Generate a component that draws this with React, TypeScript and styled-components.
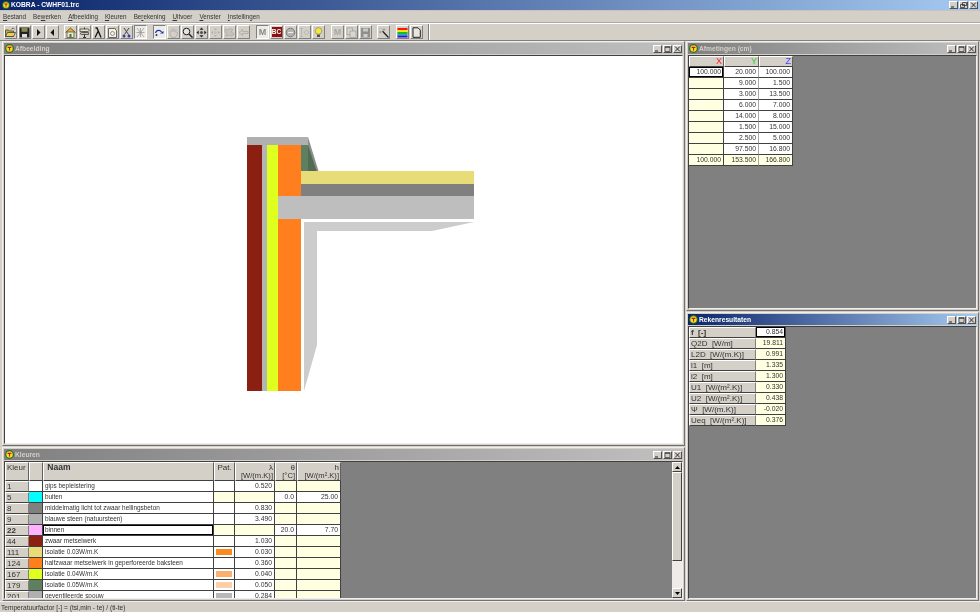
import React from "react";
import styled, { createGlobalStyle } from "styled-components";

const GlobalStyle = createGlobalStyle`
  html, body {
    margin: 0;
    padding: 0;
    overflow: hidden;
    background: #d4d0c8;
  }
  * {
    box-sizing: border-box;
  }
`;

const Page = styled.div`
  width: 980px;
  height: 612px;
  display: flex;
  flex-direction: column;
  background: #d4d0c8;
  font-family: "Liberation Sans", Arial, sans-serif;
  color: #333;
  overflow: hidden;
  filter: blur(0.3px);
`;

const AppTitle = styled.div`
  height: 11px;
  flex: none;
  display: flex;
  align-items: center;
  padding: 0 2px 1px 2px;
  gap: 1px;
  background: linear-gradient(90deg, #0a246a, #a6caf0);
  color: #fff;
  font-size: 6.7px;
  font-weight: bold;
  border-bottom: 1px solid #c4c4c4;
`;

const TitleText = styled.span`
  flex: 1;
  white-space: nowrap;
`;

const CaptionGroup = styled.div`
  display: flex;
  gap: 1px;
`;

const CaptionBtn = styled.div`
  width: 9px;
  height: 8px;
  background: #d4d0c8;
  border: 1px solid;
  border-color: #fff #505050 #505050 #fff;
  display: flex;
  align-items: center;
  justify-content: center;
  svg {
    display: block;
  }
`;

const MenuBar = styled.div`
  height: 12px;
  flex: none;
  display: flex;
  align-items: center;
  gap: 7px;
  padding-left: 3px;
  font-size: 6.3px;
  border-bottom: 1px solid #a9a9a9;
`;

const ToolBar = styled.div`
  height: 18px;
  flex: none;
  display: flex;
  align-items: center;
  padding-left: 4px;
  border-top: 1px solid #fff;
  border-bottom: 1px solid #808080;
`;

const ToolGroup = styled.div<{ $gap: number }>`
  display: flex;
  gap: 1px;
  margin-right: ${(p) => p.$gap}px;
`;

const ToolEnd = styled.div`
  width: 1px;
  height: 16px;
  background: #808080;
  box-shadow: 1px 0 0 #fff;
`;

const ToolBtn = styled.div<{ $pressed?: boolean; $lit?: boolean }>`
  width: 13px;
  height: 14px;
  display: flex;
  align-items: center;
  justify-content: center;
  border: 1px solid;
  border-color: ${(p) => (p.$pressed ? "#808080 #fff #fff #808080" : "#fff #808080 #808080 #fff")};
  background: ${(p) => (p.$lit ? "#eeece6" : "#d4d0c8")};
  svg {
    display: block;
  }
`;

const ToolLetter = styled.span<{ $color: string; $bg?: string; $size: number }>`
  display: block;
  width: 10px;
  height: 10px;
  line-height: 10px;
  text-align: center;
  font-size: ${(p) => p.$size}px;
  font-weight: bold;
  color: ${(p) => p.$color};
  background: ${(p) => p.$bg || "transparent"};
`;

const Desktop = styled.div`
  position: relative;
  flex: 1;
  min-height: 0;
`;

type FrameProps = { $x: number; $y: number; $w: number; $h: number };

const Frame = styled.section<FrameProps>`
  position: absolute;
  left: ${(p) => p.$x}px;
  top: ${(p) => p.$y}px;
  width: ${(p) => p.$w}px;
  height: ${(p) => p.$h}px;
  padding: 1px;
  display: flex;
  flex-direction: column;
  background: #d4d0c8;
  border-top: 1px solid #efefef;
  border-left: 1px solid #efefef;
  border-right: 1px solid #707070;
  border-bottom: 1px solid #707070;
`;

const FrameTitle = styled.div<{ $active?: boolean }>`
  height: 11px;
  flex: none;
  display: flex;
  align-items: center;
  gap: 1px;
  padding: 0 1px;
  font-size: 6.7px;
  font-weight: bold;
  color: ${(p) => (p.$active ? "#fff" : "#d4d0c8")};
  background: ${(p) =>
    p.$active
      ? "linear-gradient(90deg, #0a246a, #a6caf0)"
      : "linear-gradient(90deg, #808080, #c0c0c0)"};
`;

const Client = styled.div<{ $white?: boolean }>`
  flex: 1;
  min-height: 0;
  margin-top: 1px;
  position: relative;
  overflow: hidden;
  display: flex;
  align-items: flex-start;
  background: ${(p) => (p.$white ? "#fff" : "#808080")};
  border: 1px solid;
  border-color: #404040 #efefef #efefef #404040;
`;

const Grid = styled.div<{ $cols: string; $headRow?: number }>`
  display: grid;
  grid-template-columns: ${(p) => p.$cols};
  grid-template-rows: ${(p) => p.$headRow || 11}px;
  grid-auto-rows: 11px;
  flex: none;
`;

const Head = styled.div<{ $color?: string; $align?: string; $size?: number; $bold?: boolean }>`
  background: #d4d0c8;
  border: 1px solid;
  border-color: #fff #606060 #404040 #fff;
  color: ${(p) => p.$color || "#333"};
  text-align: ${(p) => p.$align || "right"};
  font-size: ${(p) => p.$size || 8}px;
  font-weight: ${(p) => (p.$bold ? "bold" : "normal")};
  line-height: 9px;
  padding: 0 1px;
  white-space: pre;
  overflow: hidden;
`;

const HeadSmall = styled.div`
  font-size: 7.6px;
  line-height: 8px;
`;

const Cell = styled.div<{ $bg?: string; $left?: boolean; $sel?: boolean; $size?: number; $rule?: boolean }>`
  background: ${(p) => p.$bg || "#fff"};
  border-right: 1px solid ${(p) => (p.$rule ? "#a8a8a8" : "#404040")};
  border-bottom: 1px solid #404040;
  font-size: ${(p) => p.$size || 6.8}px;
  line-height: 9px;
  text-align: ${(p) => (p.$left ? "left" : "right")};
  padding: 0 2px;
  white-space: nowrap;
  overflow: hidden;
  color: #333;
  box-shadow: ${(p) => (p.$sel ? "inset 0 0 0 1px #000" : "none")};
`;

const Label = styled.div<{ $bold?: boolean; $size?: number }>`
  background: #d4d0c8;
  border: 1px solid;
  border-color: #fff #808080 #404040 #fff;
  font-size: ${(p) => p.$size || 8}px;
  font-weight: ${(p) => (p.$bold ? "bold" : "normal")};
  line-height: 9px;
  padding-left: 1px;
  white-space: pre;
  overflow: hidden;
  color: #333;
`;

const Swatch = styled.div<{ $bg: string }>`
  background: ${(p) => p.$bg};
  border-right: 1px solid #404040;
  border-bottom: 1px solid #404040;
`;

const PatternCell = styled.div<{ $bg?: string }>`
  background: #fff;
  border-right: 1px solid #404040;
  border-bottom: 1px solid #404040;
  display: flex;
  align-items: center;
  justify-content: center;
  &::after {
    content: "";
    width: 16px;
    height: 6px;
    background: ${(p) => p.$bg || "transparent"};
  }
`;

const ScrollBar = styled.div`
  position: absolute;
  top: 0;
  right: 0;
  bottom: 0;
  width: 10px;
  display: flex;
  flex-direction: column;
  background: #eeece8;
`;

const ScrollBtn = styled.div`
  height: 10px;
  flex: none;
  background: #d4d0c8;
  border: 1px solid;
  border-color: #fff #404040 #404040 #fff;
  display: flex;
  align-items: center;
  justify-content: center;
`;

const ScrollThumb = styled.div`
  height: 89px;
  flex: none;
  background: #d4d0c8;
  border: 1px solid;
  border-color: #fff #404040 #404040 #fff;
`;

const ScrollRest = styled.div`
  flex: 1;
`;

const StatusBar = styled.div`
  height: 11px;
  flex: none;
  display: flex;
  align-items: center;
  padding-left: 1px;
  font-size: 6.6px;
  border-top: 1px solid #efefef;
`;

const Logo = ({ size = 9 }: { size?: number }) => (
  <svg width={size} height={size} viewBox="0 0 9 9" style={{ flex: "none" }}>
    <circle cx="4.5" cy="4.5" r="4.4" fill="#2c6a2c" />
    <circle cx="4.5" cy="4.5" r="3.2" fill="#f2e21a" />
    <path d="M2.6 3.4h3.800M4.500 3.400v3" stroke="#c01818" strokeWidth="1.100" fill="none" />
  </svg>
);

const Caption = ({ kind }: { kind: string }) => (
  <CaptionBtn>
    <svg width="7" height="6" viewBox="0 0 7 6">
      {kind === "min" && <path d="M1 5h3" stroke="#222" strokeWidth="1" />}
      {kind === "max" && <path d="M1 .5h5v5h-5zM1 1.500h5" stroke="#333" strokeWidth=".7" fill="none" />}
      {kind === "restore" && <path d="M2.500 .5h4v3h-4zM.5 2.500h4v3h-4z" stroke="#222" strokeWidth=".7" fill="#d4d0c8" />}
      {kind === "close" && <path d="M1.200 .6l4.600 4.800M5.800 .6L1.200 5.400" stroke="#222" strokeWidth=".9" />}
    </svg>
  </CaptionBtn>
);

const icons: Record<string, React.ReactNode> = {
  open: (
    <>
      <path d="M.5 3h3l1 1h4v5.500h-8z" fill="#c9a93a" stroke="#333" strokeWidth=".7" />
      <path d="M2.500 5.500h8l-2 4h-8z" fill="#e8cf5a" stroke="#333" strokeWidth=".7" />
      <path d="M6 2.500c1-1.500 2.500-1.500 3.500-.5" stroke="#333" strokeWidth=".7" fill="none" />
    </>
  ),
  save: (
    <>
      <rect x=".5" y=".5" width="10" height="10" fill="#222" />
      <rect x="2.500" y=".8" width="6" height="4" fill="#8a8a50" />
      <rect x="3" y="7" width="5" height="3.500" fill="#ddd" />
    </>
  ),
  play: <path d="M4 2l3.500 3.500L4 9z" fill="#111" />,
  back: <path d="M7 2L3.500 5.500 7 9z" fill="#111" />,
  home: (
    <>
      <path d="M.5 5.500L5.500 1l5 4.500" fill="#e0b040" stroke="#7a4a10" strokeWidth=".9" />
      <rect x="2" y="5" width="7" height="5.500" fill="#f2eac0" stroke="#444" strokeWidth=".7" />
      <rect x="4.500" y="7" width="2" height="3.500" fill="#2f7f2f" />
    </>
  ),
  sign: (
    <>
      <path d="M5.500 .5v10M4 10.500h3" stroke="#333" strokeWidth="1" />
      <path d="M1 2h8l1.500 1.200L9 4.500H1z" fill="#e8e0c8" stroke="#333" strokeWidth=".7" />
      <path d="M9.500 5.500h-7l-1.500 1 1.500 1h7z" fill="#c8c0a8" stroke="#333" strokeWidth=".7" />
    </>
  ),
  lambda: <path d="M2.500 1h1.500l4 9.500M5 4.500l-3 6" stroke="#111" strokeWidth="1.300" fill="none" />,
  page: (
    <>
      <path d="M1.500 1.500h6l2 2v7h-8z" fill="#f4f2e8" stroke="#444" strokeWidth=".8" />
      <circle cx="5.500" cy="6.500" r="2" fill="none" stroke="#777" strokeWidth=".8" />
      <path d="M7 .5l1 1.500 1.500-1" stroke="#b08020" strokeWidth=".8" fill="none" />
    </>
  ),
  scissors: (
    <>
      <path d="M3 1l4.500 6.500M8 1L3.500 7.500" stroke="#444" strokeWidth="1" />
      <circle cx="3" cy="9" r="1.500" fill="#3040b0" />
      <circle cx="8" cy="9" r="1.500" fill="#3040b0" />
    </>
  ),
  cross: <path d="M2 1l7 9M9 1l-7 9M5.500 1v9M1.500 5.500h8" stroke="#999" strokeWidth=".8" fill="none" />,
  arrow: (
    <>
      <path d="M1.500 6c.5-3 4.500-3.500 6-1" stroke="#1030a0" strokeWidth="1.200" fill="none" />
      <path d="M6 6.500h3.500V4z" fill="#1030a0" />
      <circle cx="2.500" cy="8" r="1" fill="#1030a0" />
    </>
  ),
  hand: (
    <path
      d="M2 6V3.500M4 5V1.500M6 5V1.500M8 5.500V2.500M2 6c0 3 1.500 4.500 3.500 4.500S9.500 9 9.500 5"
      stroke="#a8a8a8"
      strokeWidth=".9"
      fill="none"
    />
  ),
  zoom: (
    <>
      <circle cx="4.500" cy="4.500" r="3.300" fill="#dfe6ea" stroke="#222" strokeWidth="1" />
      <path d="M7 7l3.500 3.500" stroke="#222" strokeWidth="1.400" />
    </>
  ),
  move: (
    <>
      <path d="M5.500 .5l2 2.200h-4zM5.500 10.500l2-2.200h-4zM.5 5.500l2.200-2v4zM10.500 5.500l-2.200-2v4z" fill="#222" />
      <circle cx="5.500" cy="5.500" r="1.600" fill="#555" />
    </>
  ),
  moveOff: (
    <>
      <path d="M5.500 1l1.500 2H4zM5.500 10l1.500-2H4zM1 5.500l2-1.500v3zM10 5.500l-2-1.500v3z" fill="#b0b0b0" />
      <circle cx="5.500" cy="5.500" r="1.500" fill="#c0c0c0" />
    </>
  ),
  blob: (
    <path
      d="M1 2l3 1 2-1.500 3 1-2 2.500 3 1.500-2 3-3-1.500-3 1.500.5-3L1 5z"
      fill="#c8c4bc"
      stroke="#a8a8a8"
      strokeWidth=".7"
    />
  ),
  left: <path d="M1 5.500l3.500-3v2h5.500v2H4.500v2z" fill="#d4d0c8" stroke="#a8a8a8" strokeWidth=".8" />,
  circleE: (
    <>
      <circle cx="5.500" cy="5.500" r="4.300" fill="#b4b4b4" stroke="#666" strokeWidth=".8" />
      <path d="M3 5.500h5" stroke="#eee" strokeWidth="1" />
    </>
  ),
  bars: (
    <path d="M2.500 1.500v8M1 1.500h3M1 9.500h3M7.500 3.500a2 2 0 1 1-.01 0" stroke="#b0b0b0" strokeWidth=".8" fill="none" />
  ),
  bulb: (
    <>
      <circle cx="5.500" cy="4" r="3.300" fill="#f5ea30" stroke="#777" strokeWidth=".6" />
      <rect x="4" y="7.500" width="3" height="2.500" fill="#555" />
    </>
  ),
  copy: (
    <>
      <rect x="1" y="1" width="5.500" height="6.500" fill="#d8d6cf" stroke="#a0a0a0" strokeWidth=".8" />
      <rect x="4" y="4" width="6" height="6.500" fill="#d8d6cf" stroke="#a0a0a0" strokeWidth=".8" />
    </>
  ),
  saveOff: (
    <>
      <rect x="1" y="1" width="9" height="9.500" fill="#8f8f8f" />
      <rect x="3" y="1.500" width="5" height="3" fill="#c8c8c8" />
      <rect x="3.500" y="7" width="4" height="3" fill="#d0d0d0" />
    </>
  ),
  wand: (
    <>
      <path d="M2 1.500l8.500 9" stroke="#222" strokeWidth="1.300" />
      <path d="M2 1.500l2.500 2.700" stroke="#eee" strokeWidth="1.300" />
      <path d="M6 1v3M4.500 2.500h3M1 5h2.500M2.200 4v2.500" stroke="#888" strokeWidth=".6" />
    </>
  ),
  rainbow: (
    <>
      <rect x=".5" y="1" width="10" height="2" fill="#ff1010" />
      <rect x=".5" y="3" width="10" height="2" fill="#f5e810" />
      <rect x=".5" y="5" width="10" height="2" fill="#10c020" />
      <rect x=".5" y="7" width="10" height="1.500" fill="#10b0e0" />
      <rect x=".5" y="8.500" width="10" height="2" fill="#4010d0" />
    </>
  ),
  doc: <path d="M2 .8h5l2.300 2.300v7.200H2z" fill="#e8e6e0" stroke="#222" strokeWidth="1" />,
};

const ToolIcon = ({ name }: { name: string }) => (
  <svg width="11" height="11" viewBox="0 0 11 11">
    {icons[name]}
  </svg>
);

const toolGroups: { gap: number; items: string[] }[] = [
  { gap: 5, items: ["open", "save", "play", "back"] },
  { gap: 6, items: ["home", "sign", "lambda", "page", "scissors", "cross"] },
  { gap: 6, items: ["arrow", "hand", "zoom", "move", "moveOff", "blob", "left"] },
  { gap: 6, items: ["M", "BC", "circleE", "bars", "bulb"] },
  { gap: 5, items: ["mOff", "copy", "saveOff"] },
  { gap: 6, items: ["wand"] },
  { gap: 5, items: ["rainbow", "doc"] },
];

const renderTool = (name: string) => {
  if (name === "M") {
    return (
      <ToolBtn key={name} $pressed $lit>
        <ToolLetter $color="#888" $size={9}>M</ToolLetter>
      </ToolBtn>
    );
  }
  if (name === "mOff") {
    return (
      <ToolBtn key={name}>
        <ToolLetter $color="#a8a8a8" $size={9}>M</ToolLetter>
      </ToolBtn>
    );
  }
  if (name === "BC") {
    return (
      <ToolBtn key={name}>
        <ToolLetter $color="#fff" $bg="#8b1010" $size={6.5}>BC</ToolLetter>
      </ToolBtn>
    );
  }
  const on = name === "cross" || name === "arrow";
  return (
    <ToolBtn key={name} $pressed={on} $lit={on}>
      <ToolIcon name={name} />
    </ToolBtn>
  );
};

const menus: [string, string, string][] = [
  ["", "B", "estand"],
  ["Be", "w", "erken"],
  ["", "A", "fbeelding"],
  ["", "K", "leuren"],
  ["Be", "r", "ekening"],
  ["", "U", "itvoer"],
  ["", "V", "enster"],
  ["", "I", "nstellingen"],
];

const cream = "#ffffe1";

const dimensions = [
  ["100.000", "20.000", "100.000"],
  ["", "9.000", "1.500"],
  ["", "3.000", "13.500"],
  ["", "6.000", "7.000"],
  ["", "14.000", "8.000"],
  ["", "1.500", "15.000"],
  ["", "2.500", "5.000"],
  ["", "97.500", "16.800"],
  ["100.000", "153.500", "166.800"],
];

const results = [
  ["f  [-]", "0.854"],
  ["Q2D  [W/m]", "19.811"],
  ["L2D  [W/(m.K)]", "0.991"],
  ["l1  [m]", "1.335"],
  ["l2  [m]", "1.300"],
  ["U1  [W/(m².K)]", "0.330"],
  ["U2  [W/(m².K)]", "0.438"],
  ["Ψ  [W/(m.K)]", "-0.020"],
  ["Ueq  [W/(m².K)]", "0.376"],
];

type Colour = {
  id: string;
  swatch: string;
  name: string;
  pat?: string;
  lambda?: string;
  theta?: string;
  h?: string;
  boundary?: boolean;
};

const colours: Colour[] = [
  { id: "1", swatch: "#ffffff", name: "gips bepleistering", lambda: "0.520" },
  { id: "5", swatch: "#00ffff", name: "buiten", theta: "0.0", h: "25.00", boundary: true },
  { id: "8", swatch: "#808080", name: "middelmatig licht tot zwaar hellingsbeton", lambda: "0.830" },
  { id: "9", swatch: "#b0b0b0", name: "blauwe steen (natuursteen)", lambda: "3.490" },
  { id: "22", swatch: "#ffb0ff", name: "binnen", theta: "20.0", h: "7.70", boundary: true },
  { id: "44", swatch: "#8b2012", name: "zwaar metselwerk", lambda: "1.030" },
  { id: "111", swatch: "#e8dc78", name: "isolatie 0.03W/m.K", pat: "#f98a20", lambda: "0.030" },
  { id: "124", swatch: "#ff7f1e", name: "halfzwaar metselwerk in geperforeerde baksteen", lambda: "0.360" },
  { id: "167", swatch: "#dfff1e", name: "isolatie 0.04W/m.K", pat: "#fbb070", lambda: "0.040" },
  { id: "179", swatch: "#5f8060", name: "isolatie 0.05W/m.K", pat: "#fdd0a8", lambda: "0.050" },
  { id: "201", swatch: "#b0b0b0", name: "geventileerde spouw", pat: "#b8b8b8", lambda: "0.284" },
];

const Detail = () => (
  <svg width="677" height="388" viewBox="5 56 677 388">
    <rect x="247" y="137" width="61" height="8" fill="#b0b0b0" />
    <path d="M308 137l10.500 34H308z" fill="#8c8c8c" />
    <path d="M301 145h7l8.500 26H301z" fill="#4f6d50" />
    <rect x="301" y="145" width="7" height="26" fill="#5f8060" />
    <rect x="247" y="145" width="15" height="246" fill="#8b2012" />
    <rect x="262" y="145" width="5" height="246" fill="#b4b4b4" />
    <rect x="267" y="145" width="11" height="246" fill="#dfff1e" />
    <rect x="278" y="145" width="23" height="246" fill="#ff7f1e" />
    <rect x="301" y="171" width="173" height="13" fill="#e8dc78" />
    <rect x="301" y="184" width="173" height="12" fill="#808080" />
    <rect x="278" y="196" width="196" height="23" fill="#bebebe" />
    <path d="M304 222h170l-42 9H317v114l-13 46z" fill="#cccccc" />
  </svg>
);

export default function App() {
  return (
    <Page>
      <GlobalStyle />
      <AppTitle>
        <Logo size={8} />
        <TitleText>KOBRA - CWHF01.trc</TitleText>
        <CaptionGroup>
          <Caption kind="min" />
          <Caption kind="restore" />
          <Caption kind="close" />
        </CaptionGroup>
      </AppTitle>

      <MenuBar>
        {menus.map(([a, key, b]) => (
          <span key={a + key + b}>
            {a}
            <u>{key}</u>
            {b}
          </span>
        ))}
      </MenuBar>

      <ToolBar>
        {toolGroups.map((g, i) => (
          <ToolGroup key={i} $gap={g.gap}>
            {g.items.map(renderTool)}
          </ToolGroup>
        ))}
        <ToolEnd />
      </ToolBar>

      <Desktop>
        <Frame $x={2} $y={0} $w={683} $h={405}>
          <FrameTitle>
            <Logo />
            <TitleText>Afbeelding</TitleText>
            <CaptionGroup>
              <Caption kind="min" />
              <Caption kind="max" />
              <Caption kind="close" />
            </CaptionGroup>
          </FrameTitle>
          <Client $white>
            <Detail />
          </Client>
        </Frame>

        <Frame $x={2} $y={406} $w={683} $h={154}>
          <FrameTitle>
            <Logo />
            <TitleText>Kleuren</TitleText>
            <CaptionGroup>
              <Caption kind="min" />
              <Caption kind="max" />
              <Caption kind="close" />
            </CaptionGroup>
          </FrameTitle>
          <Client>
            <Grid $cols="24px 14px 171px 21px 40px 22px 44px" $headRow={19}>
              <Head $align="left">Kleur</Head>
              <Head />
              <Head $align="left" $size={8.500} $bold> Naam</Head>
              <Head $align="center">Pat.</Head>
              <Head>
                λ
                <HeadSmall>[W/(m.K)]</HeadSmall>
              </Head>
              <Head>
                θ
                <HeadSmall>[°C]</HeadSmall>
              </Head>
              <Head>
                h
                <HeadSmall>[W/(m².K)]</HeadSmall>
              </Head>
              {colours.map((c) => (
                <React.Fragment key={c.id}>
                  <Label $bold={c.id === "22"}>{c.id}</Label>
                  <Swatch $bg={c.swatch} />
                  <Cell $left $size={6.400} $sel={c.id === "22"}>{c.name}</Cell>
                  {c.boundary ? <Cell $bg={cream} /> : <PatternCell $bg={c.pat} />}
                  <Cell $bg={c.boundary ? cream : "#fff"}>{c.lambda}</Cell>
                  <Cell $bg={c.boundary ? "#fff" : cream}>{c.theta}</Cell>
                  <Cell $bg={c.boundary ? "#fff" : cream}>{c.h}</Cell>
                </React.Fragment>
              ))}
            </Grid>
            <ScrollBar>
              <ScrollBtn>
                <svg width="5" height="3" viewBox="0 0 5 3">
                  <path d="M2.500 0L5 3H0z" fill="#000" />
                </svg>
              </ScrollBtn>
              <ScrollThumb />
              <ScrollRest />
              <ScrollBtn>
                <svg width="5" height="3" viewBox="0 0 5 3">
                  <path d="M2.500 3L5 0H0z" fill="#000" />
                </svg>
              </ScrollBtn>
            </ScrollBar>
          </Client>
        </Frame>

        <Frame $x={686} $y={0} $w={293} $h={270}>
          <FrameTitle>
            <Logo />
            <TitleText>Afmetingen (cm)</TitleText>
            <CaptionGroup>
              <Caption kind="min" />
              <Caption kind="max" />
              <Caption kind="close" />
            </CaptionGroup>
          </FrameTitle>
          <Client>
            <Grid $cols="35px 35px 34px">
              <Head $color="#ff2020" $size={9}>X</Head>
              <Head $color="#30d030" $size={9}>Y</Head>
              <Head $color="#4040ff" $size={9}>Z</Head>
              {dimensions.map((row, i) => (
                <React.Fragment key={i}>
                  <Cell $bg={i === 0 ? "#fff" : cream} $sel={i === 0}>{row[0]}</Cell>
                  <Cell $rule $bg={i === dimensions.length - 1 ? cream : "#fff"}>{row[1]}</Cell>
                  <Cell $bg={i === dimensions.length - 1 ? cream : "#fff"}>{row[2]}</Cell>
                </React.Fragment>
              ))}
            </Grid>
          </Client>
        </Frame>

        <Frame $x={686} $y={271} $w={293} $h={289}>
          <FrameTitle $active>
            <Logo />
            <TitleText>Rekenresultaten</TitleText>
            <CaptionGroup>
              <Caption kind="min" />
              <Caption kind="max" />
              <Caption kind="close" />
            </CaptionGroup>
          </FrameTitle>
          <Client>
            <Grid $cols="67px 30px">
              {results.map(([label, value], i) => (
                <React.Fragment key={label}>
                  <Label $bold={i === 0}>{label}</Label>
                  <Cell $bg={i === 0 ? "#fff" : cream} $sel={i === 0}>{value}</Cell>
                </React.Fragment>
              ))}
            </Grid>
          </Client>
        </Frame>
      </Desktop>

      <StatusBar>Temperatuurfactor [-] = (tsi,min - te) / (ti-te)</StatusBar>
    </Page>
  );
}
